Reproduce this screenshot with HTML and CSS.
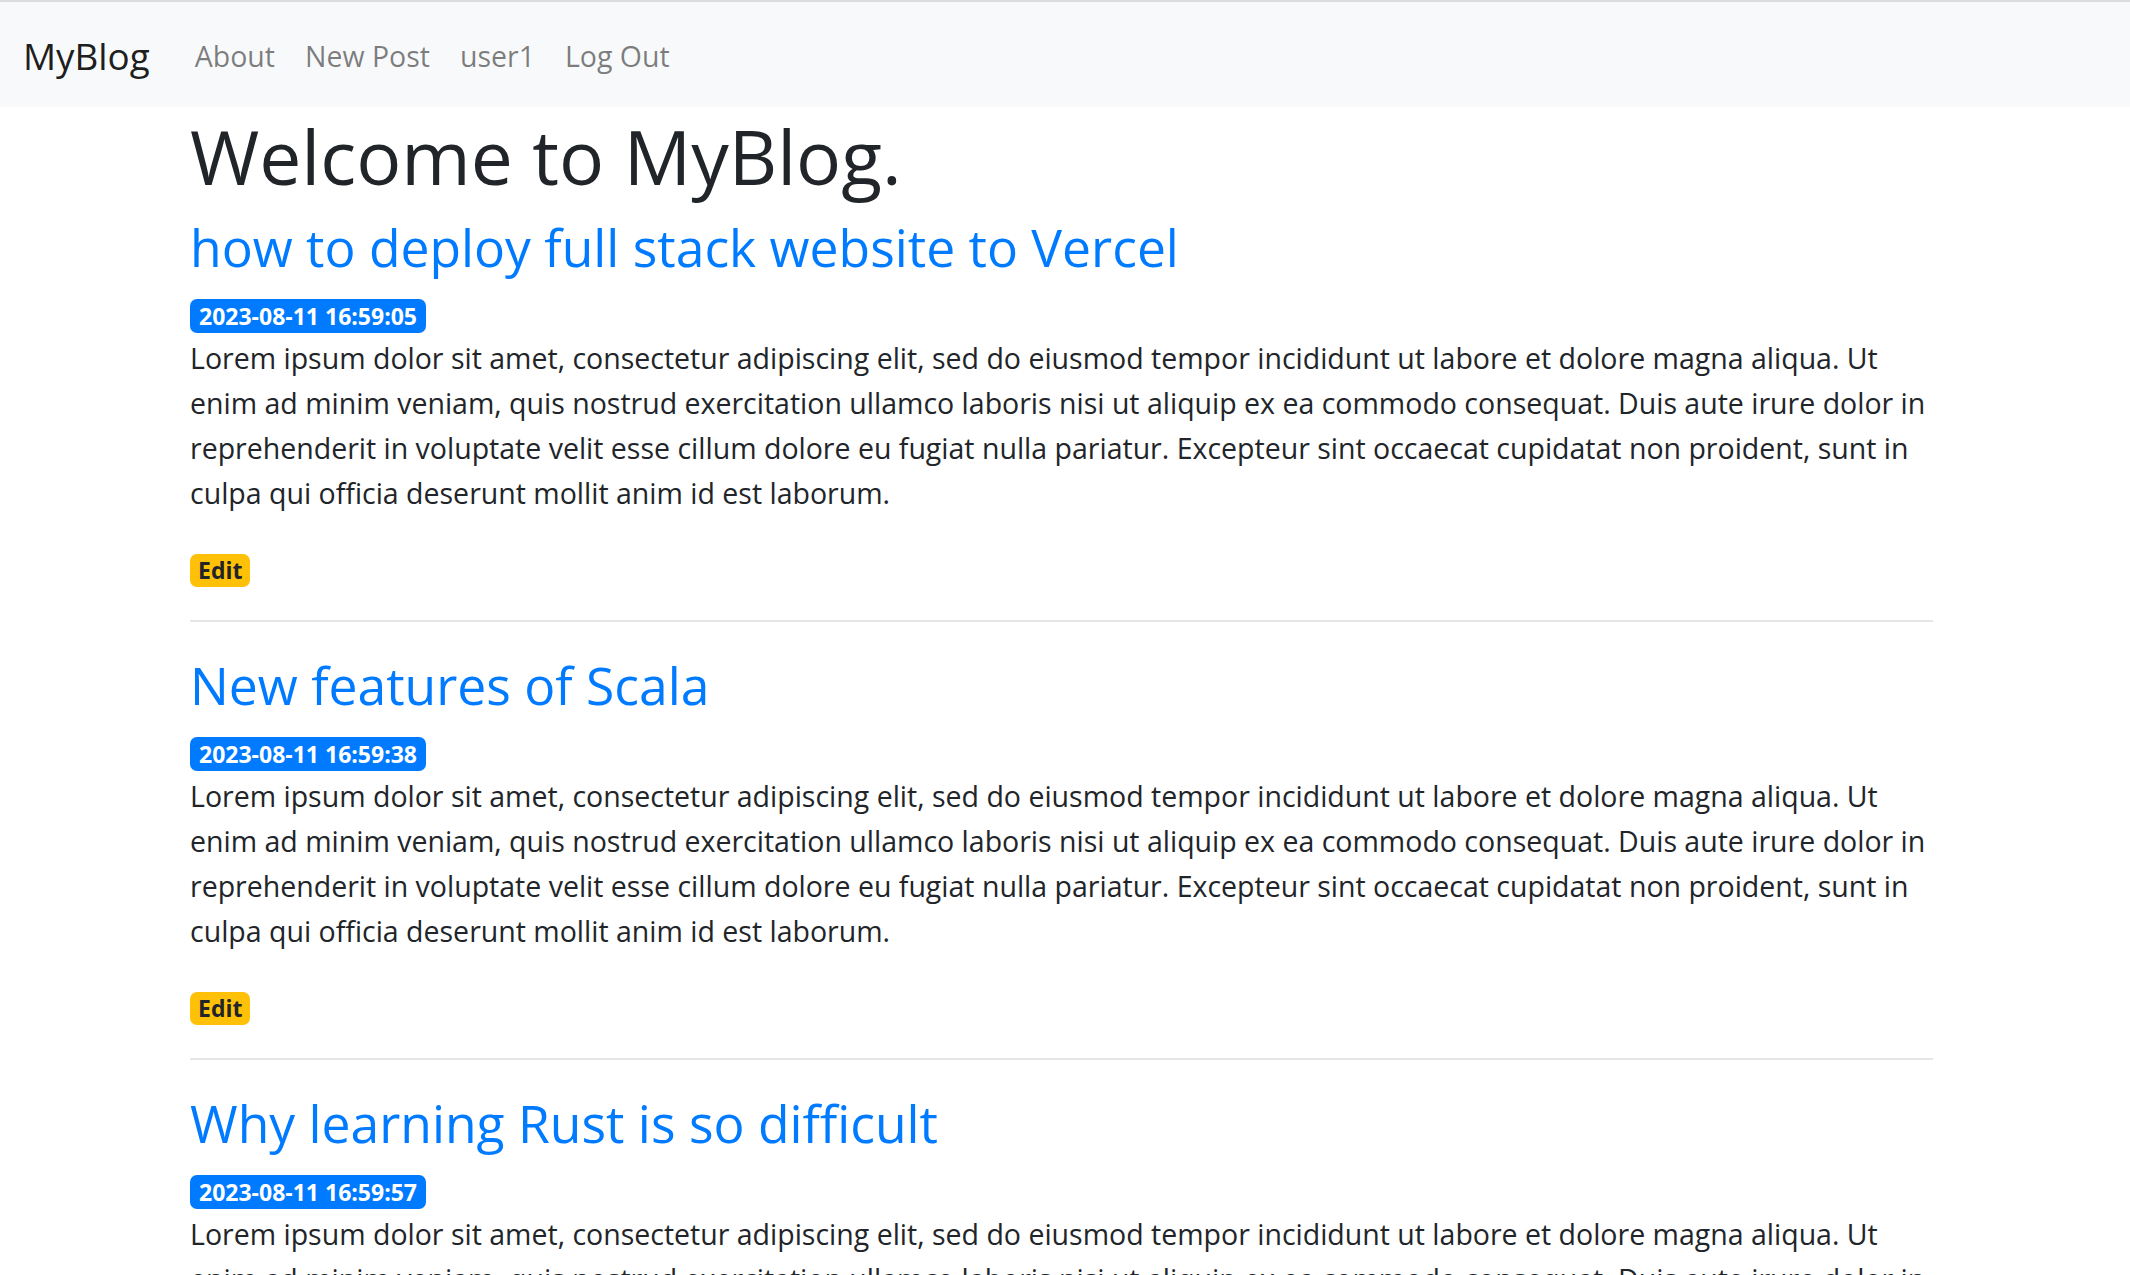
FILE: index.html
```html
<!DOCTYPE html>
<html lang="en">
<head>
<meta charset="utf-8">
<title>MyBlog</title>
<link rel="stylesheet" href="styles.css">
</head>
<body>
<nav class="navbar">
  <a class="brand" href="#">MyBlog</a>
  <ul class="nav">
    <li><a class="nav-link" href="#">About</a></li>
    <li><a class="nav-link" href="#">New Post</a></li>
    <li><a class="nav-link" href="#">user1</a></li>
    <li><a class="nav-link" href="#">Log Out</a></li>
  </ul>
</nav>
<main class="container">
  <h1 class="welcome">Welcome to MyBlog.</h1>

  <article class="post">
    <h3 class="post-title"><a href="#">how to deploy full stack website to Vercel</a></h3>
    <div class="meta"><span class="badge badge-primary">2023-08-11 16:59:05</span></div>
    <p class="post-body">Lorem ipsum dolor sit amet, consectetur adipiscing elit, sed do eiusmod tempor incididunt ut labore et dolore magna aliqua. Ut enim ad minim veniam, quis nostrud exercitation ullamco laboris nisi ut aliquip ex ea commodo consequat. Duis aute irure dolor in reprehenderit in voluptate velit esse cillum dolore eu fugiat nulla pariatur. Excepteur sint occaecat cupidatat non proident, sunt in culpa qui officia deserunt mollit anim id est laborum.</p>
    <div class="actions"><a class="badge badge-warning" href="#">Edit</a></div>
  </article>
  <hr class="divider">

  <article class="post">
    <h3 class="post-title"><a href="#">New features of Scala</a></h3>
    <div class="meta"><span class="badge badge-primary">2023-08-11 16:59:38</span></div>
    <p class="post-body">Lorem ipsum dolor sit amet, consectetur adipiscing elit, sed do eiusmod tempor incididunt ut labore et dolore magna aliqua. Ut enim ad minim veniam, quis nostrud exercitation ullamco laboris nisi ut aliquip ex ea commodo consequat. Duis aute irure dolor in reprehenderit in voluptate velit esse cillum dolore eu fugiat nulla pariatur. Excepteur sint occaecat cupidatat non proident, sunt in culpa qui officia deserunt mollit anim id est laborum.</p>
    <div class="actions"><a class="badge badge-warning" href="#">Edit</a></div>
  </article>
  <hr class="divider">

  <article class="post">
    <h3 class="post-title"><a href="#">Why learning Rust is so difficult</a></h3>
    <div class="meta"><span class="badge badge-primary">2023-08-11 16:59:57</span></div>
    <p class="post-body">Lorem ipsum dolor sit amet, consectetur adipiscing elit, sed do eiusmod tempor incididunt ut labore et dolore magna aliqua. Ut enim ad minim veniam, quis nostrud exercitation ullamco laboris nisi ut aliquip ex ea commodo consequat. Duis aute irure dolor in reprehenderit in voluptate velit esse cillum dolore eu fugiat nulla pariatur. Excepteur sint occaecat cupidatat non proident, sunt in culpa qui officia deserunt mollit anim id est laborum.</p>
    <div class="actions"><a class="badge badge-warning" href="#">Edit</a></div>
  </article>
</main>
</body>
</html>
```
FILE: styles.css
```css
* { box-sizing: border-box; }

body {
  margin: 0;
  font-family: "Open Sans", "Noto Sans", sans-serif;
  font-size: 28.5px;
  line-height: 45px;
  color: #212529;
  background: #fff;
}

a { text-decoration: none; }

.navbar {
  display: flex;
  align-items: center;
  height: 107px;
  padding: 3px 0 0 23px;
  border-top: 2px solid #dcdcdc;
  background: #f8f9fa;
}

.brand {
  font-size: 36.8px;
  line-height: 56px;
  color: rgba(0, 0, 0, 0.9);
  margin-right: 30px;
}

.nav {
  display: flex;
  list-style: none;
  margin: 0;
  padding: 0;
}

.nav-link {
  display: block;
  padding: 0 15px;
  font-size: 28.5px;
  line-height: 43px;
  color: rgba(0, 0, 0, 0.5);
}

.container {
  max-width: 1743px;
  margin-left: 190px;
}

.welcome {
  margin: 4px 0 16px;
  font-size: 75px;
  line-height: 90px;
  font-weight: 500;
  color: #212529;
}

.post-title {
  margin: 0 0 22px;
  font-size: 51.6px;
  line-height: 60px;
  font-weight: 500;
}

.post-title a { color: #007bff; }

.meta {
  display: flex;
  height: 34px;
  margin-bottom: 3px;
}

.badge {
  display: inline-block;
  padding: 5.5px 9px;
  font-size: 23px;
  font-weight: 700;
  line-height: 23px;
  border-radius: 7px;
  white-space: nowrap;
}

.badge-primary { background: #007bff; color: #fff; }
.badge-warning { background: #ffc107; color: #212529; padding: 5px 8px; }

.post-body {
  margin: 0 0 38px;
}

.actions {
  display: flex;
  height: 33px;
}

.divider {
  margin: 33px 0 33px;
  border: 0;
  border-top: 2px solid #e6e6e6;
}
```
